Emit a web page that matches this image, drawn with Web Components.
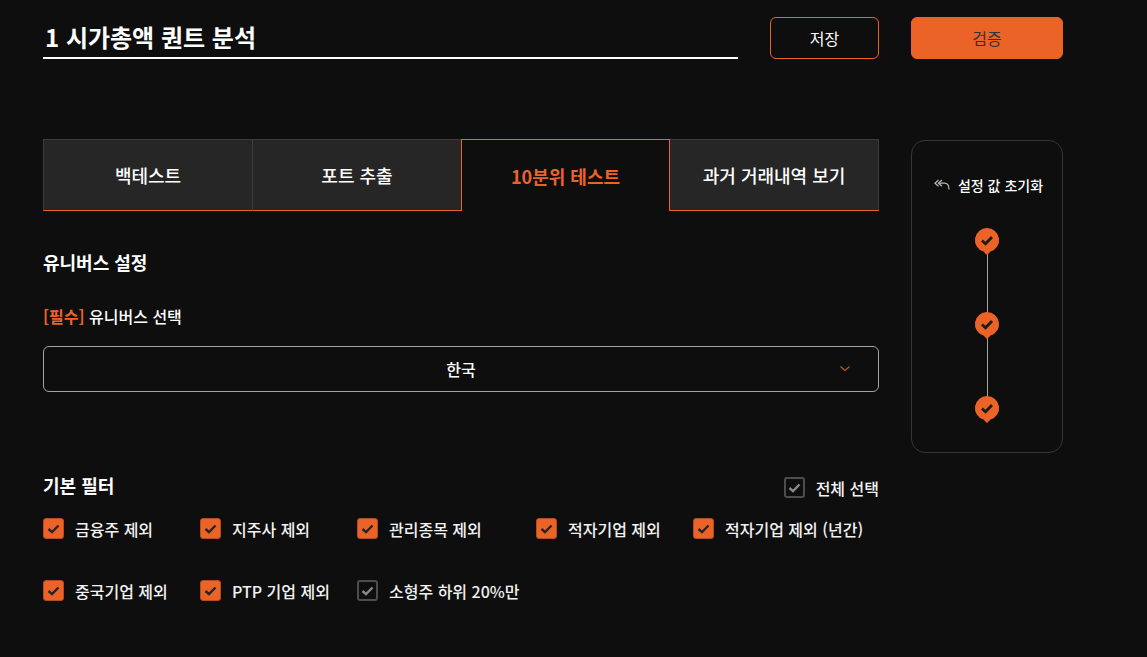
<!DOCTYPE html>
<html lang="ko">
<head>
<meta charset="utf-8">
<title>퀀트 분석</title>
<style>
  html, body { margin: 0; background: #0e0e0e; }
  body { font-family: "Noto Sans CJK KR", "Noto Sans", sans-serif; color: #fff; overflow: hidden; }
</style>
</head>
<body>
<quant-page>
  <title-field slot="title">1 시가총액 퀀트 분석</title-field>
  <action-button slot="save" variant="outline">저장</action-button>
  <action-button slot="verify" variant="solid">검증</action-button>

  <tab-bar slot="tabs">
    <tab-item>백테스트</tab-item>
    <tab-item>포트 추출</tab-item>
    <tab-item active>10분위 테스트</tab-item>
    <tab-item>과거 거래내역 보기</tab-item>
  </tab-bar>

  <section-title slot="universe-title">유니버스 설정</section-title>
  <field-label slot="universe-label">유니버스 선택</field-label>
  <select-box slot="universe-select">한국</select-box>

  <section-title slot="filter-title">기본 필터</section-title>
  <check-item slot="filter-all" off>전체 선택</check-item>
  <filter-grid slot="filters">
    <check-item>금융주 제외</check-item>
    <check-item>지주사 제외</check-item>
    <check-item>관리종목 제외</check-item>
    <check-item>적자기업 제외</check-item>
    <check-item>적자기업 제외 (년간)</check-item>
    <check-item>중국기업 제외</check-item>
    <check-item>PTP 기업 제외</check-item>
    <check-item off>소형주 하위 20%만</check-item>
  </filter-grid>

  <step-panel slot="side">
    <step-pin></step-pin>
    <step-pin></step-pin>
    <step-pin></step-pin>
  </step-panel>
</quant-page>

<script>
const ORANGE = '#ec6328'

class QuantPage extends HTMLElement {
  constructor() {
    super()
    this.attachShadow({ mode: 'open' })
    this.shadowRoot.innerHTML = `
      <style>
        :host {
          display: grid;
          grid-template-columns: 836px 152px;
          column-gap: 32px;
          row-gap: 80px;
          grid-template-rows: 42px auto;
          padding: 17px 0 0 43px;
          align-items: start;
        }
        .head {
          display: flex;
          gap: 32px;
          align-items: stretch;
          height: 42px;
        }
        .head ::slotted([slot="title"]) { flex: 1; }
        .filter-head {
          display: flex;
          justify-content: space-between;
          align-items: flex-start;
          margin-top: 81px;
          height: 25px;
        }
        .filter-head ::slotted([slot="filter-all"]) { margin-top: 4px; }
        .universe-title { margin-top: 39px; }
        .universe-label { margin-top: 30px; }
        .universe-select { margin-top: 18px; }
        .filters { margin-top: 20px; }
        .aside { margin-top: 1px; }
      </style>
      <div class="head">
        <slot name="title"></slot>
        <slot name="save"></slot>
      </div>
      <slot name="verify"></slot>
      <main>
        <slot name="tabs"></slot>
        <div class="universe-title"><slot name="universe-title"></slot></div>
        <div class="universe-label"><slot name="universe-label"></slot></div>
        <div class="universe-select"><slot name="universe-select"></slot></div>
        <div class="filter-head">
          <slot name="filter-title"></slot>
          <slot name="filter-all"></slot>
        </div>
        <div class="filters"><slot name="filters"></slot></div>
      </main>
      <div class="aside"><slot name="side"></slot></div>
    `
  }
}

class TitleField extends HTMLElement {
  constructor() {
    super()
    this.attachShadow({ mode: 'open' })
    this.shadowRoot.innerHTML = `
      <style>
        :host {
          display: flex;
          align-items: center;
          box-sizing: border-box;
          height: 42px;
          padding: 0 2px 2px;
          border-bottom: 2px solid #fff;
          font-size: 24px;
          font-weight: 700;
          color: #fff;
        }
      </style>
      <slot></slot>
    `
  }
}

class ActionButton extends HTMLElement {
  constructor() {
    super()
    this.attachShadow({ mode: 'open' })
    this.shadowRoot.innerHTML = `
      <style>
        :host {
          display: flex;
          align-items: center;
          justify-content: center;
          box-sizing: border-box;
          height: 42px;
          width: 109px;
          padding-bottom: 1px;
          border: 1px solid ${ORANGE};
          border-radius: 6px;
          font-size: 16px;
          color: #fff;
        }
        :host([variant="solid"]) {
          width: 152px;
          background: ${ORANGE};
          color: #333;
        }
      </style>
      <slot></slot>
    `
  }
}

class TabBar extends HTMLElement {
  constructor() {
    super()
    this.attachShadow({ mode: 'open' })
    this.shadowRoot.innerHTML = `
      <style>
        :host {
          display: grid;
          grid-template-columns: 210px 209px 208px 209px;
          height: 72px;
        }
      </style>
      <slot></slot>
    `
  }
}

class TabItem extends HTMLElement {
  constructor() {
    super()
    this.attachShadow({ mode: 'open' })
    this.shadowRoot.innerHTML = `
      <style>
        :host {
          display: flex;
          align-items: center;
          justify-content: center;
          box-sizing: border-box;
          background: #262626;
          border: 1px solid #3c3c3c;
          border-width: 1px 1px 1px 0;
          border-bottom-color: ${ORANGE};
          font-size: 18px;
          font-weight: 500;
          color: #fff;
        }
        :host(:first-child) { border-left-width: 1px; }
        :host([active]) {
          background: #0e0e0e;
          border: 1px solid ${ORANGE};
          border-bottom: 0;
          margin-left: -1px;
          font-weight: 700;
          color: ${ORANGE};
        }
      </style>
      <slot></slot>
    `
  }
}

class SectionTitle extends HTMLElement {
  constructor() {
    super()
    this.attachShadow({ mode: 'open' })
    this.shadowRoot.innerHTML = `
      <style>
        :host {
          display: block;
          font-size: 18px;
          font-weight: 700;
          line-height: 24px;
          color: #fff;
        }
      </style>
      <slot></slot>
    `
  }
}

class FieldLabel extends HTMLElement {
  constructor() {
    super()
    this.attachShadow({ mode: 'open' })
    this.shadowRoot.innerHTML = `
      <style>
        :host {
          display: block;
          font-size: 16px;
          font-weight: 500;
          line-height: 24px;
          color: #fff;
        }
        b { color: ${ORANGE}; font-weight: 700; }
      </style>
      <b>[필수]</b> <slot></slot>
    `
  }
}

class SelectBox extends HTMLElement {
  constructor() {
    super()
    this.attachShadow({ mode: 'open' })
    this.shadowRoot.innerHTML = `
      <style>
        :host {
          display: flex;
          align-items: center;
          justify-content: center;
          position: relative;
          box-sizing: border-box;
          height: 46px;
          padding-bottom: 1px;
          border: 1px solid #a3a3a3;
          border-radius: 6px;
          font-size: 16px;
          font-weight: 500;
          color: #fff;
        }
        svg { position: absolute; right: 27px; top: 18px; }
      </style>
      <slot></slot>
      <svg width="12" height="8" viewBox="0 0 12 8" fill="none" aria-hidden="true">
        <path d="M1.5 1.5 6 5.5l4.5-4" stroke="#c2561f" stroke-width="1.2"/>
      </svg>
    `
  }
}

class FilterGrid extends HTMLElement {
  constructor() {
    super()
    this.attachShadow({ mode: 'open' })
    this.shadowRoot.innerHTML = `
      <style>
        :host {
          display: grid;
          grid-template-columns: 157px 157px 179px 157px auto;
          row-gap: 41px;
        }
      </style>
      <slot></slot>
    `
  }
}

class CheckItem extends HTMLElement {
  constructor() {
    super()
    this.attachShadow({ mode: 'open' })
    const off = this.hasAttribute('off')
    this.shadowRoot.innerHTML = `
      <style>
        :host {
          display: flex;
          align-items: center;
          gap: 11px;
          height: 21px;
          font-size: 16px;
          font-weight: 500;
          color: #f2f2f2;
          white-space: nowrap;
        }
        .box {
          flex: none;
          box-sizing: border-box;
          width: 21px;
          height: 21px;
          display: flex;
          align-items: center;
          justify-content: center;
          border-radius: 3px;
          background: ${ORANGE};
          border: 1px solid #b34c1f;
        }
        :host([off]) .box { background: transparent; border: 2px solid #4d4d4d; }
      </style>
      <span class="box">
        <svg width="13" height="10" viewBox="0 0 13 10" fill="none" aria-hidden="true">
          <path d="M1.5 5 5 8.2 11.5 1.5" stroke="${off ? '#8a8a8a' : '#262626'}" stroke-width="2.4"/>
        </svg>
      </span>
      <slot></slot>
    `
  }
}

class StepPanel extends HTMLElement {
  constructor() {
    super()
    this.attachShadow({ mode: 'open' })
    this.shadowRoot.innerHTML = `
      <style>
        :host {
          display: flex;
          flex-direction: column;
          align-items: center;
          box-sizing: border-box;
          width: 152px;
          height: 313px;
          padding-top: 34px;
          border: 1px solid #363636;
          border-radius: 14px;
        }
        .reset {
          display: flex;
          align-items: center;
          gap: 8px;
          height: 20px;
          font-size: 14px;
          font-weight: 500;
          color: #fff;
          margin-bottom: 33px;
          margin-left: 3px;
        }
        .steps {
          display: flex;
          flex-direction: column;
          align-items: center;
          gap: 58px;
          background: linear-gradient(#a3a3a3, #a3a3a3) center / 1px 100% no-repeat;
        }
      </style>
      <div class="reset">
        <svg width="16" height="12" viewBox="0 0 16 12" fill="none" stroke="#b8b8b8" stroke-width="1.2" aria-hidden="true">
          <path d="M4.5 1 1 4.2 4.5 7.2"/>
          <path d="M8 1 4.5 4.2 8 7.2"/>
          <path d="M4.5 4.2H10.5C13 4.2 15 6.5 15 10.5"/>
        </svg>
        <span>설정 값 초기화</span>
      </div>
      <div class="steps"><slot></slot></div>
    `
  }
}

class StepPin extends HTMLElement {
  constructor() {
    super()
    this.attachShadow({ mode: 'open' })
    this.shadowRoot.innerHTML = `
      <style>
        :host { display: block; width: 24px; height: 26px; }
        svg { display: block; overflow: visible; }
      </style>
      <svg width="24" height="26" viewBox="0 0 24 26" aria-hidden="true">
        <path d="M12 0a12 12 0 0 1 3.5 23.5L12 27 8.5 23.5A12 12 0 0 1 12 0Z" fill="${ORANGE}"/>
        <path d="M7 12.5 10.5 15.8 17 9" fill="none" stroke="#1c1c1c" stroke-width="2.8"/>
      </svg>
    `
  }
}

customElements.define('quant-page', QuantPage)
customElements.define('title-field', TitleField)
customElements.define('action-button', ActionButton)
customElements.define('tab-bar', TabBar)
customElements.define('tab-item', TabItem)
customElements.define('section-title', SectionTitle)
customElements.define('field-label', FieldLabel)
customElements.define('select-box', SelectBox)
customElements.define('filter-grid', FilterGrid)
customElements.define('check-item', CheckItem)
customElements.define('step-panel', StepPanel)
customElements.define('step-pin', StepPin)
</script>
</body>
</html>
